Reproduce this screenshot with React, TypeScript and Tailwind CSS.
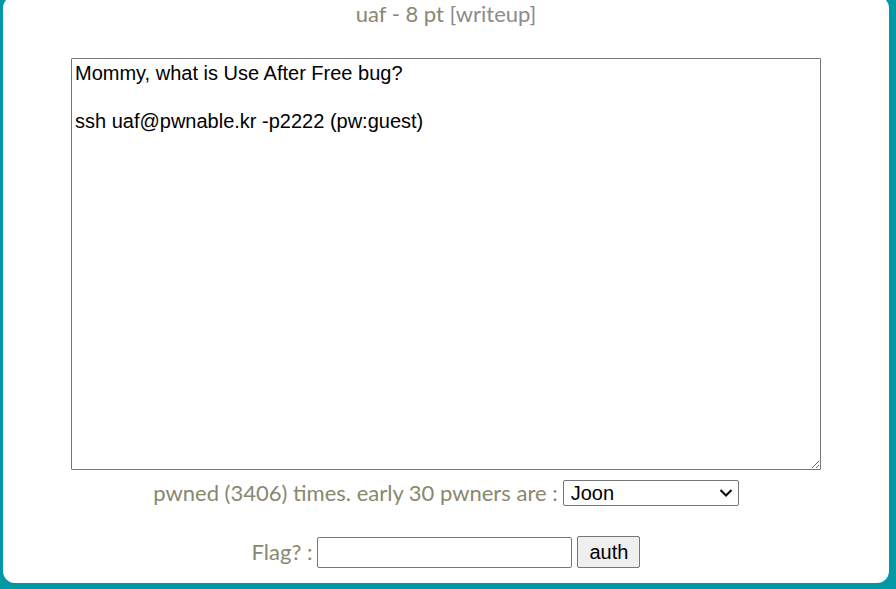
import React from 'react';

const olive = 'text-[#88886f]';

const App: React.FC = () => {
  return (
    <div className="h-[589px] w-[896px] overflow-hidden bg-[#0199a5]">
      <div className="ml-[3px] mr-[7px] -mt-[4px] h-[587px] rounded-[12px] bg-white flex flex-col items-center font-['Lato',sans-serif]">
        <h1 className={`mt-[5px] text-[22px] leading-[26px] font-normal ${olive}`}>
          uaf - 8 pt <a className="text-[#8c8c8c]">[writeup]</a>
        </h1>

        <textarea
          readOnly
          className="mt-[31px] w-[750px] h-[412px] border border-[#767676] rounded-[1px] px-[3px] py-[2px] text-[20px] leading-[24px] text-black font-['Liberation_Sans',Arial,sans-serif] resize-y outline-none"
          defaultValue={'Mommy, what is Use After Free bug?\n\nssh uaf@pwnable.kr -p2222 (pw:guest)'}
        />

        <div className="mt-[10px] flex items-center gap-[5px]">
          <span className={`text-[22px] leading-[26px] ${olive}`}>pwned (3406) times. early 30 pwners are :</span>
          <div className="relative">
            <select className="appearance-none w-[176px] h-[26px] border border-[#767676] rounded-[2px] bg-white pl-[7px] text-[20px] leading-[24px] text-black font-['Liberation_Sans',Arial,sans-serif] outline-none">
              <option>Joon</option>
            </select>
            <svg
              className="pointer-events-none absolute right-[6px] top-[8px]"
              width="14"
              height="10"
              viewBox="0 0 14 10"
              fill="none"
            >
              <path d="M1.5 2 L7 7.5 L12.5 2" stroke="#111" strokeWidth="2.2" />
            </svg>
          </div>
        </div>

        <div className="mt-[30px] flex items-center gap-[5px]">
          <span className={`text-[22px] leading-[26px] ${olive}`}>Flag? :</span>
          <input className="w-[255px] h-[31px] border border-[#767676] rounded-[2px] px-[3px] outline-none" />
          <button className="w-[63px] h-[32px] border border-[#767676] rounded-[2px] bg-[#efefef] text-[20px] text-black font-['Liberation_Sans',Arial,sans-serif]">
            auth
          </button>
        </div>
      </div>
    </div>
  );
};

export default App;
